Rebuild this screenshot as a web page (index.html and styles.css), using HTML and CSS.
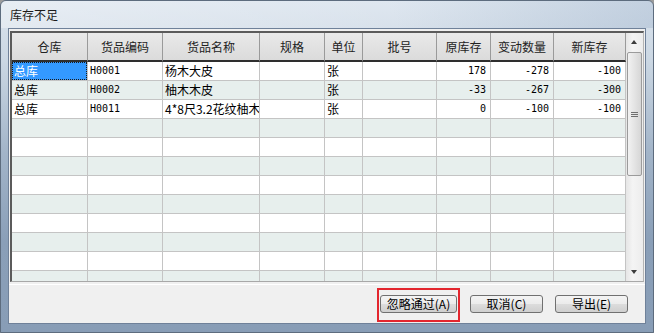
FILE: index.html
```html
<!DOCTYPE html>
<html lang="zh-CN">
<head>
  <meta charset="UTF-8" />
  <title>库存不足</title>
  <link rel="stylesheet" href="styles.css">
</head>
<body>
  <div class="window">
    <div class="titlebar">库存不足</div>
    <div class="client">
      <div class="grid">
        <div class="table">
          <div class="row head">
            <div class="cell">仓库</div>
            <div class="cell">货品编码</div>
            <div class="cell">货品名称</div>
            <div class="cell">规格</div>
            <div class="cell">单位</div>
            <div class="cell">批号</div>
            <div class="cell">原库存</div>
            <div class="cell">变动数量</div>
            <div class="cell">新库存</div>
          </div>
          <div class="row">
            <div class="cell"><span class="selected">总库</span></div>
            <div class="cell code">H0001</div>
            <div class="cell">杨木大皮</div>
            <div class="cell"></div>
            <div class="cell">张</div>
            <div class="cell"></div>
            <div class="cell num">178</div>
            <div class="cell num">-278</div>
            <div class="cell num">-100</div>
          </div>
          <div class="row alt">
            <div class="cell">总库</div>
            <div class="cell code">H0002</div>
            <div class="cell">柚木木皮</div>
            <div class="cell"></div>
            <div class="cell">张</div>
            <div class="cell"></div>
            <div class="cell num">-33</div>
            <div class="cell num">-267</div>
            <div class="cell num">-300</div>
          </div>
          <div class="row">
            <div class="cell">总库</div>
            <div class="cell code">H0011</div>
            <div class="cell mixed">4*8尺3.2花纹柚木</div>
            <div class="cell"></div>
            <div class="cell">张</div>
            <div class="cell"></div>
            <div class="cell num">0</div>
            <div class="cell num">-100</div>
            <div class="cell num">-100</div>
          </div>
          <div class="row alt empty"><div class="cell"></div><div class="cell"></div><div class="cell"></div><div class="cell"></div><div class="cell"></div><div class="cell"></div><div class="cell"></div><div class="cell"></div><div class="cell"></div></div>
          <div class="row empty"><div class="cell"></div><div class="cell"></div><div class="cell"></div><div class="cell"></div><div class="cell"></div><div class="cell"></div><div class="cell"></div><div class="cell"></div><div class="cell"></div></div>
          <div class="row alt empty"><div class="cell"></div><div class="cell"></div><div class="cell"></div><div class="cell"></div><div class="cell"></div><div class="cell"></div><div class="cell"></div><div class="cell"></div><div class="cell"></div></div>
          <div class="row empty"><div class="cell"></div><div class="cell"></div><div class="cell"></div><div class="cell"></div><div class="cell"></div><div class="cell"></div><div class="cell"></div><div class="cell"></div><div class="cell"></div></div>
          <div class="row alt empty"><div class="cell"></div><div class="cell"></div><div class="cell"></div><div class="cell"></div><div class="cell"></div><div class="cell"></div><div class="cell"></div><div class="cell"></div><div class="cell"></div></div>
          <div class="row empty"><div class="cell"></div><div class="cell"></div><div class="cell"></div><div class="cell"></div><div class="cell"></div><div class="cell"></div><div class="cell"></div><div class="cell"></div><div class="cell"></div></div>
          <div class="row alt empty"><div class="cell"></div><div class="cell"></div><div class="cell"></div><div class="cell"></div><div class="cell"></div><div class="cell"></div><div class="cell"></div><div class="cell"></div><div class="cell"></div></div>
          <div class="row empty"><div class="cell"></div><div class="cell"></div><div class="cell"></div><div class="cell"></div><div class="cell"></div><div class="cell"></div><div class="cell"></div><div class="cell"></div><div class="cell"></div></div>
          <div class="row alt empty"><div class="cell"></div><div class="cell"></div><div class="cell"></div><div class="cell"></div><div class="cell"></div><div class="cell"></div><div class="cell"></div><div class="cell"></div><div class="cell"></div></div>
        </div>
        <div class="scrollbar">
          <div class="arrow up"></div>
          <div class="track">
            <div class="thumb"><span class="grip"></span></div>
          </div>
          <div class="arrow down"></div>
        </div>
      </div>
      <div class="buttons">
        <div class="mark-wrap">
          <button class="btn wide">忽略通过(A)</button>
          <div class="red-mark"></div>
        </div>
        <button class="btn">取消(C)</button>
        <button class="btn">导出(E)</button>
      </div>
    </div>
  </div>
</body>
</html>
```

FILE: styles.css
```css
html, body {
  margin: 0;
  padding: 0;
  background: #9c9c9c;
  font-family: "Noto Sans CJK SC", "Liberation Sans", sans-serif;
  font-size: 12px;
  color: #000;
}
/* --- ウィンドウ枠 --- */
.window {
  width: 654px;
  height: 333px;
  box-sizing: border-box;
  border: 1px solid #5d6c7e;
  border-radius: 6px 6px 0 0;
  background: linear-gradient(180deg, #dbe4ee 0, #cbd7e3 60px, #a3b5c9 150px, #8a9fb8 240px, #889db6 100%);
  display: flex;
  flex-direction: column;
  overflow: hidden;
}
.titlebar {
  height: 27px;
  line-height: 27px;
  padding-left: 9px;
  color: #1b1b1b;
  background: linear-gradient(90deg, rgba(255,255,255,0.35) 0%, rgba(255,255,255,0.1) 60%, rgba(150,172,198,0.35) 100%);
  flex-shrink: 0;
}
.client {
  margin: 0 7px 8px 7px;
  height: 296px;
  box-sizing: border-box;
  border: 1px solid #6f8199;
  background: #f0f0f0;
  display: flex;
  flex-direction: column;
}
/* --- グリッド --- */
.grid {
  margin: 2px 1px 0 1px;
  height: 251px;
  box-sizing: border-box;
  border-style: solid;
  border-width: 2px 1px 1px 2px;
  border-color: #5b5b5b #b4b4b4 #a8a8a8 #5b5b5b;
  display: flex;
  background: #fff;
}
.table {
  width: 614px;
  overflow: hidden;
  flex-shrink: 0;
}
.row {
  display: grid;
  grid-template-columns: 76px 75px 97px 65px 38px 74px 54px 63px 72px;
  height: 19px;
}
.row.alt {
  background: #e7efed;
}
.cell {
  box-sizing: border-box;
  border-right: 1px solid #c4c4c4;
  border-bottom: 1px solid #c4c4c4;
  padding: 0 2px;
  line-height: 18px;
  white-space: nowrap;
  overflow: hidden;
}
.head {
  height: 29px;
  background: linear-gradient(180deg, #e9e9e9, #dadada);
}
.head .cell {
  text-align: center;
  line-height: 27px;
  border-right-color: #9a9a9a;
  border-bottom: 2px solid #2e2e2e;
  color: #222;
}
.code, .num {
  font-family: "DejaVu Sans Mono", "Liberation Mono", monospace;
  font-size: 10px;
}
.num {
  text-align: right;
  padding-right: 4px;
}
.cell:has(.selected) {
  padding: 0;
}
.selected {
  display: block;
  height: 18px;
  padding: 0 2px;
  background: #3399ff;
  color: #fff;
  outline: 1px dotted #1a1a1a;
  outline-offset: -1px;
}
/* --- スクロールバー --- */
.scrollbar {
  width: 17px;
  display: flex;
  flex-direction: column;
  background: linear-gradient(90deg, #e6e6e6, #f4f4f4 40%, #ececec);
}
.arrow {
  height: 17px;
  position: relative;
  flex-shrink: 0;
}
.arrow::after {
  content: '';
  position: absolute;
  left: 5px;
  border-left: 3.5px solid transparent;
  border-right: 3.5px solid transparent;
}
.arrow.up::after {
  top: 7px;
  border-bottom: 4px solid #3c3c3c;
}
.arrow.down::after {
  top: 6px;
  border-top: 4px solid #3c3c3c;
}
.track {
  flex: 1;
  padding-top: 2px;
}
.thumb {
  margin: 0 1px;
  height: 124px;
  box-sizing: border-box;
  border: 1px solid #9b9b9b;
  border-radius: 2px;
  background: linear-gradient(90deg, #f2f2f2, #e4e4e4 50%, #d6d6d6);
  display: flex;
  align-items: center;
  justify-content: center;
}
.grip {
  width: 7px;
  height: 5px;
  background: repeating-linear-gradient(180deg, #6f6f6f 0 1px, transparent 1px 2px);
  margin-top: 0;
}
/* --- ボタン --- */
.buttons {
  margin-top: 2px;
  flex: 1;
  border-top: 1px solid #fff;
  display: flex;
  justify-content: flex-end;
  align-items: flex-start;
  gap: 12px;
  padding: 10px 17px 0 0;
}
.btn {
  width: 73px;
  height: 18px;
  padding: 0;
  font-family: "Noto Sans CJK SC", "Liberation Sans", sans-serif;
  font-size: 12px;
  line-height: 16px;
  color: #000;
  border: 1px solid #707070;
  border-radius: 3px;
  background: linear-gradient(180deg, #f4f4f4 0%, #ebebeb 50%, #dcdcdc 51%, #cfcfcf 100%);
}
.btn.wide {
  width: 77px;
}
.mark-wrap {
  position: relative;
  margin-right: 1px;
}
.mark-wrap .btn {
  display: block;
}
.red-mark {
  position: absolute;
  left: -3px;
  top: -7px;
  width: 83px;
  height: 34px;
  box-sizing: border-box;
  border: 2px solid #e3262e;
}
```
